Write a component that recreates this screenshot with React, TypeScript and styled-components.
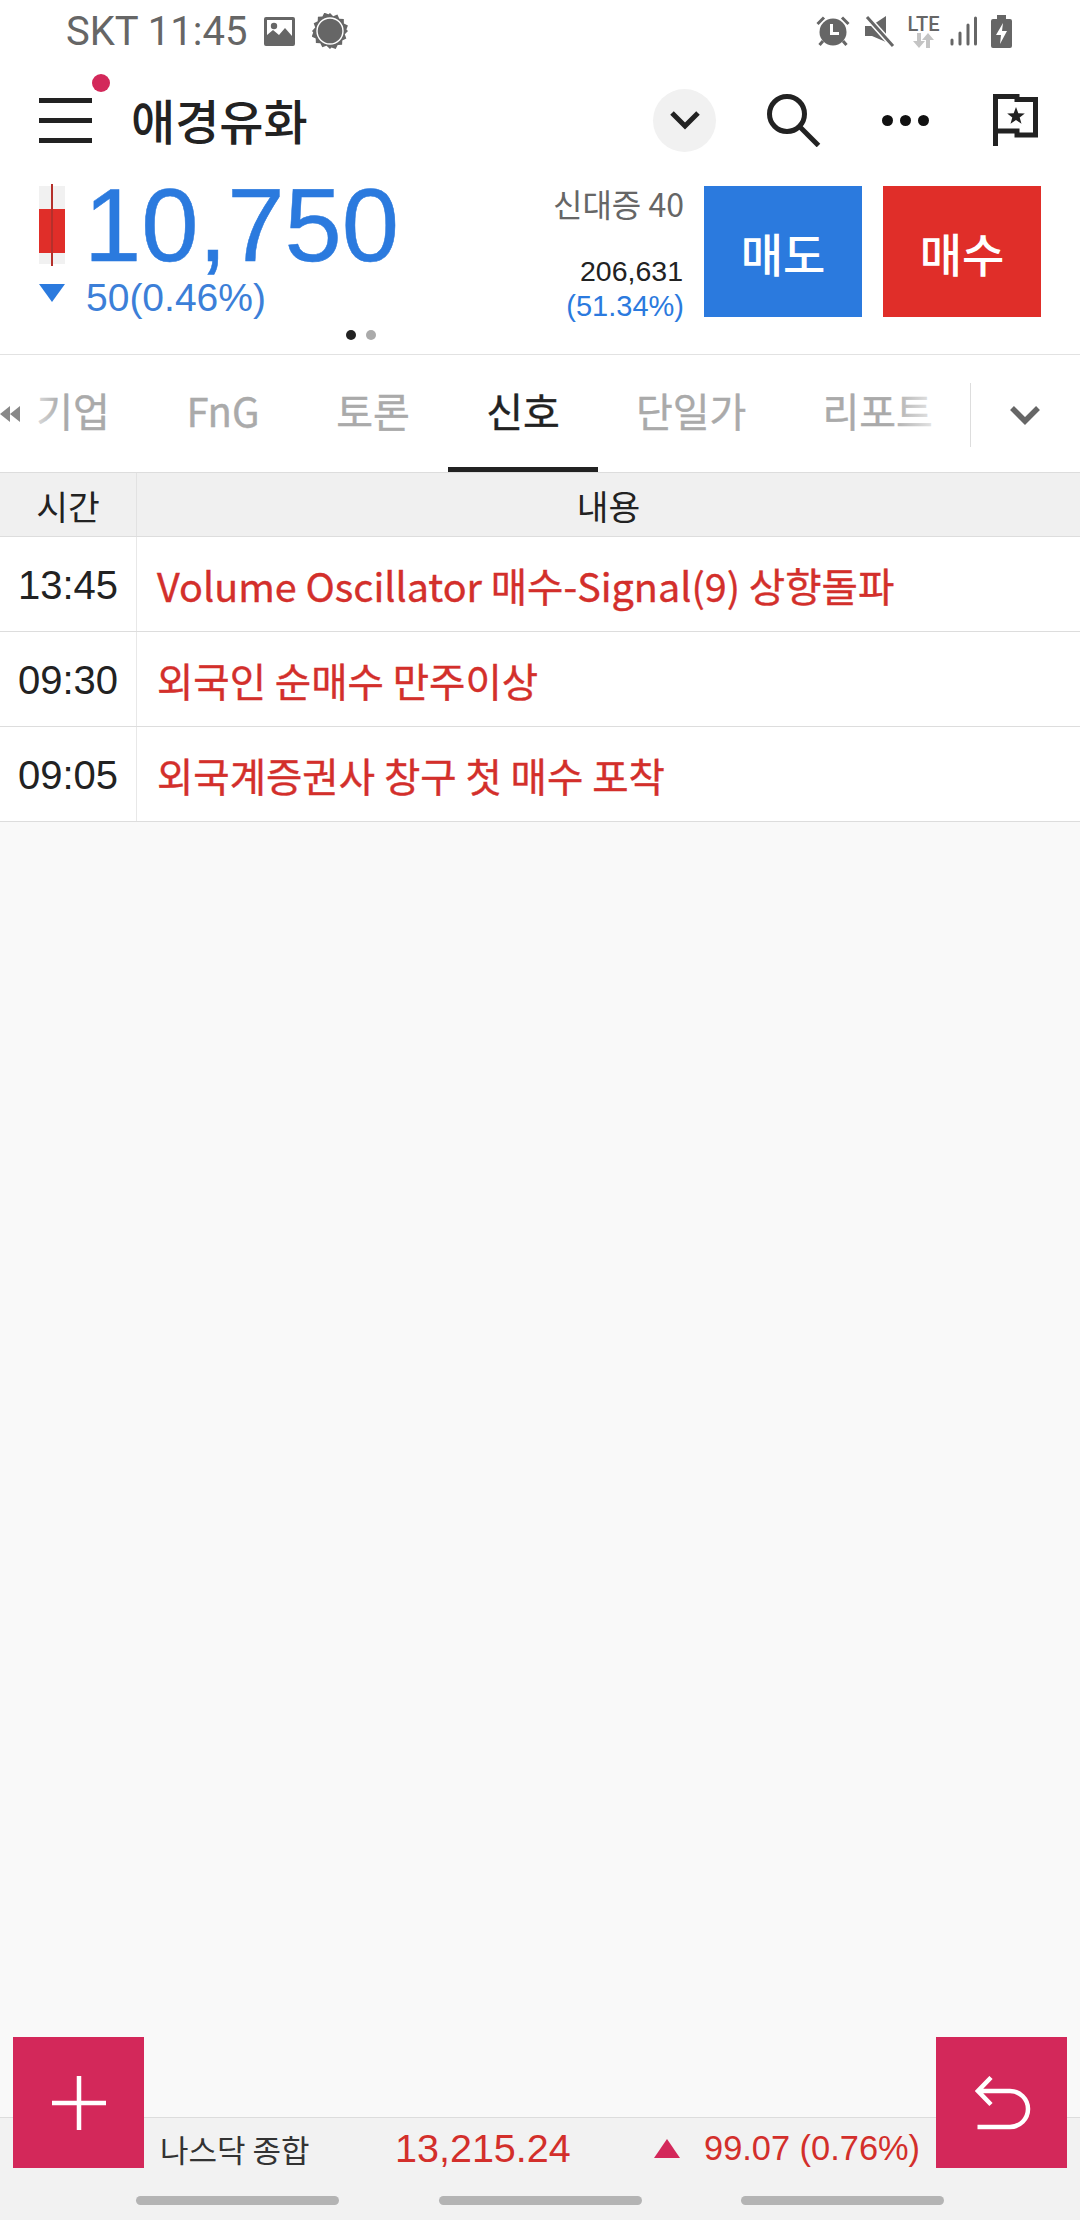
import styled, { createGlobalStyle } from 'styled-components';

const KR = `"Noto Sans CJK KR", "Noto Sans", sans-serif`;
const ARIAL = `"Liberation Sans", Arial, sans-serif`;
const BLUE = '#2b7ade';
const RED = '#e02e29';
const TEXT_RED = '#d32f2b';
const PINK = '#d3285a';

const signals = [
  { time: '13:45', text: 'Volume Oscillator 매수-Signal(9) 상향돌파' },
  { time: '09:30', text: '외국인 순매수 만주이상' },
  { time: '09:05', text: '외국계증권사 창구 첫 매수 포착' },
];

const tabs = ['기업', 'FnG', '토론', '신호', '단일가', '리포트'];

const App = () => (
  <Screen>
    <GlobalStyle />
    <StatusBar>
      <StatusGroup>
        <StatusText>SKT 11:45</StatusText>
        <svg width="31" height="29" viewBox="0 0 31 29" style={{ marginLeft: 17 }}>
          <path fillRule="evenodd" fill="#666" d="M2 0h27a2 2 0 0 1 2 2v25a2 2 0 0 1-2 2H2a2 2 0 0 1-2-2V2a2 2 0 0 1 2-2zM3 3v15l6-5 6 5 6-7 7 8V3z" />
          <circle cx="10" cy="9" r="3.2" fill="#666" />
        </svg>
        <svg width="36" height="36" viewBox="0 0 36 36" style={{ marginLeft: 17 }}>
          <path fill="#666" d="M18 0l3.2 3.2 4.2-1.6 1.9 4.1 4.5.2.1 4.5 4 2-1.5 4.2L36 18l-3.2 3.2 1.5 4.2-4 2-.2 4.4-4.4.2-2 4-4.2-1.6L18 36l-3.5-3.2-4.2 1.5-2-4-4.4-.2-.2-4.5-4-2 1.5-4.2L0 18l3.2-3.6-1.5-4.2 4-2 .2-4.4 4.5-.2 1.9-3.9 4.2 1.6z" />
          <circle cx="18" cy="18" r="13" fill="#666" stroke="#fff" strokeWidth="1.4" />
        </svg>
      </StatusGroup>
      <StatusGroup>
        <svg width="34" height="32" viewBox="0 0 34 32">
          <path stroke="#666" strokeWidth="3" d="M1.500 9L8 2.500M32.500 9L26 2.500M7 26l-3.500 4M27 26l3.500 4" />
          <circle cx="17" cy="17" r="13.500" fill="#666" />
          <path stroke="#fff" strokeWidth="3" fill="none" d="M15.500 9v9.500H23" />
        </svg>
        <svg width="30" height="32" viewBox="0 0 30 32" style={{ marginLeft: 15 }}>
          <path fill="#666" d="M0 11h6L21 1v26L7 21H0z" />
          <path stroke="#fff" strokeWidth="6" d="M1 1l27 30" />
          <path stroke="#666" strokeWidth="3" d="M2 2l26 29" />
        </svg>
        <LteIcon>
          <LteLabel>LTE</LteLabel>
          <svg width="24" height="15" viewBox="0 0 24 15">
            <path fill="#c4c4c4" d="M4 0h4v8h4l-6 7-6-7h4zM17 15h-4V7H9l6-7 6 7h-4z" transform="translate(1 0)" />
          </svg>
        </LteIcon>
        <svg width="27" height="30" viewBox="0 0 27 30" style={{ marginLeft: 11 }}>
          <path stroke="#666" strokeWidth="3" strokeLinecap="round" d="M2 28v-4M10 28V17M18 28V9M25.500 28V2" />
        </svg>
        <svg width="21" height="33" viewBox="0 0 21 33" style={{ marginLeft: 14 }}>
          <path fillRule="evenodd" fill="#666" d="M6 0h9v4h4a2 2 0 0 1 2 2v25a2 2 0 0 1-2 2H2a2 2 0 0 1-2-2V6a2 2 0 0 1 2-2h4zM12 8l-7 12h5l-1 9 7-13h-5z" />
        </svg>
      </StatusGroup>
    </StatusBar>

    <Header>
      <MenuButton>
        <MenuBar />
        <MenuBar />
        <MenuBar />
        <MenuDot />
      </MenuButton>
      <Title>애경유화</Title>
      <HeaderActions>
        <ChevronCircle>
          <svg width="30" height="20" viewBox="0 0 30 20">
            <path fill="none" stroke="#222" strokeWidth="5" d="M2 3l13 13L28 3" />
          </svg>
        </ChevronCircle>
        <svg width="54" height="53" viewBox="0 0 54 53" style={{ marginLeft: 51 }}>
          <circle cx="20" cy="20" r="17.500" fill="none" stroke="#222" strokeWidth="5" />
          <path stroke="#222" strokeWidth="5" d="M33 33l18.500 18.500" />
        </svg>
        <MoreDots>
          <MoreDot />
          <MoreDot />
          <MoreDot />
        </MoreDots>
        <svg width="45" height="52" viewBox="0 0 45 52" style={{ marginLeft: 64 }}>
          <path fill="none" stroke="#222" strokeWidth="5" d="M2.500 52V2.500H24V5.500H42.500V41H24V37H2.500" />
          <path fill="#222" d="M23 13l2.300 6.200 6.500.2-5.100 4.100 1.800 6.300-5.500-3.700-5.500 3.700 1.800-6.300-5.100-4.100 6.500-.2z" />
        </svg>
      </HeaderActions>
    </Header>

    <Quote>
      <QuoteMain>
        <PriceBlock>
          <PriceRow>
            <Candle>
              <CandleRange />
              <CandleBody />
              <CandleWick />
            </Candle>
            <Price>10,750</Price>
          </PriceRow>
          <ChangeRow>
            <DownTriangle />
            <Change>50(0.46%)</Change>
          </ChangeRow>
        </PriceBlock>
        <VolumeBlock>
          <CreditLabel>신대증 40</CreditLabel>
          <VolumeValue>206,631</VolumeValue>
          <VolumeRate>(51.34%)</VolumeRate>
        </VolumeBlock>
        <TradeButton $color={BLUE}>매도</TradeButton>
        <TradeButton $color={RED}>매수</TradeButton>
      </QuoteMain>
      <Pager>
        <PagerDot $active />
        <PagerDot />
      </Pager>
    </Quote>

    <TabBar>
      <TabScroller>
        {tabs.map(tab => (
          <Tab key={tab} $active={tab === '신호'}>
            {tab}
          </Tab>
        ))}
        <LeftFade>
          <svg width="20" height="16" viewBox="0 0 20 16">
            <path fill="#888" d="M10 0v16L0 8zM20 0v16L10 8z" />
          </svg>
        </LeftFade>
        <RightFade />
      </TabScroller>
      <TabMore>
        <svg width="30" height="20" viewBox="0 0 30 20">
          <path fill="none" stroke="#666" strokeWidth="5.500" d="M2 3l13 13L28 3" />
        </svg>
      </TabMore>
    </TabBar>

    <TableHead>
      <TimeHead>시간</TimeHead>
      <ContentHead>내용</ContentHead>
    </TableHead>
    {signals.map(signal => (
      <SignalRow key={signal.time}>
        <TimeCell>{signal.time}</TimeCell>
        <ContentCell>{signal.text}</ContentCell>
      </SignalRow>
    ))}

    <Blank />

    <Footer>
      <Ticker>
        <TickerName>나스닥 종합</TickerName>
        <TickerValue>13,215.24</TickerValue>
        <UpTriangle />
        <TickerChange>99.07 (0.76%)</TickerChange>
      </Ticker>
      <NavHandles>
        <NavHandle />
        <NavHandle />
        <NavHandle />
      </NavHandles>
      <FloatButton $side="left">
        <svg width="54" height="54" viewBox="0 0 54 54">
          <path stroke="#fff" strokeWidth="4.500" d="M0 27h54M27 0v54" />
        </svg>
      </FloatButton>
      <FloatButton $side="right">
        <svg width="56" height="54" viewBox="0 0 56 54" style={{ marginLeft: 3 }}>
          <path fill="none" stroke="#fff" strokeWidth="4.500" d="M16 1.500L3 15l13 13.500M3 15H35a18 18 0 0 1 0 36H2.500" />
        </svg>
      </FloatButton>
    </Footer>
  </Screen>
);

export default App;

const GlobalStyle = createGlobalStyle`
  html, body {
    margin: 0;
    padding: 0;
    background: #f9f9f9;
  }
  * {
    box-sizing: border-box;
  }
`;

const Screen = styled.div`
  width: 1080px;
  height: 2220px;
  display: flex;
  flex-direction: column;
  overflow: hidden;
  background: #f9f9f9;
  font-family: ${KR};
`;

const StatusBar = styled.div`
  height: 62px;
  padding: 0 68px 0 66px;
  display: flex;
  justify-content: space-between;
  align-items: center;
  background: #fff;
`;

const StatusGroup = styled.div`
  display: flex;
  align-items: center;
`;

const StatusText = styled.span`
  padding-top: 2px;
  font-family: Roboto, sans-serif;
  font-size: 40px;
  line-height: 44px;
  color: #666;
`;

const LteIcon = styled.div`
  margin-left: 13px;
  width: 31px;
  display: flex;
  flex-direction: column;
  align-items: center;
`;

const LteLabel = styled.span`
  font-family: Roboto, sans-serif;
  font-size: 20px;
  font-weight: 500;
  line-height: 18px;
  color: #666;
`;

const Header = styled.div`
  height: 116px;
  padding: 0 42px 0 39px;
  display: flex;
  align-items: center;
  background: #fff;
`;

const MenuButton = styled.div`
  position: relative;
  width: 53px;
  height: 45px;
  display: flex;
  flex-direction: column;
  justify-content: space-between;
`;

const MenuBar = styled.span`
  display: block;
  height: 5px;
  background: #222;
`;

const MenuDot = styled.span`
  position: absolute;
  left: 53px;
  top: -24px;
  width: 18px;
  height: 18px;
  border-radius: 50%;
  background: ${PINK};
`;

const Title = styled.h1`
  margin: 0 0 2px 39px;
  font-size: 48px;
  line-height: 60px;
  font-weight: 500;
  color: #222;
`;

const HeaderActions = styled.div`
  margin-left: auto;
  display: flex;
  align-items: center;
`;

const ChevronCircle = styled.div`
  width: 63px;
  height: 63px;
  border-radius: 50%;
  background: #f1f1f1;
  display: flex;
  align-items: center;
  justify-content: center;
`;

const MoreDots = styled.div`
  margin-left: 61px;
  display: flex;
  gap: 7px;
`;

const MoreDot = styled.span`
  width: 11px;
  height: 11px;
  border-radius: 50%;
  background: #111;
`;

const Quote = styled.div`
  height: 177px;
  display: flex;
  flex-direction: column;
  background: #fff;
  border-bottom: 1px solid #e2e2e2;
`;

const QuoteMain = styled.div`
  height: 150px;
  padding: 7px 39px 0 39px;
  display: flex;
  align-items: flex-start;
`;

const PriceBlock = styled.div`
  margin-top: -1px;
  margin-right: auto;
  display: flex;
  flex-direction: column;
`;

const PriceRow = styled.div`
  height: 91px;
  display: flex;
  align-items: flex-start;
`;

const Candle = styled.div`
  position: relative;
  width: 26px;
  height: 82px;
`;

const CandleRange = styled.span`
  position: absolute;
  left: 0;
  right: 0;
  top: 2px;
  bottom: 2px;
  background: #f1f1f1;
`;

const CandleWick = styled.span`
  position: absolute;
  left: 12px;
  top: 0;
  bottom: 0;
  width: 2px;
  background: #b5302b;
`;

const CandleBody = styled.span`
  position: absolute;
  left: 0;
  right: 0;
  top: 25px;
  height: 44px;
  background: ${RED};
`;

const Price = styled.span`
  margin: -4px 0 0 19px;
  font-family: ${ARIAL};
  font-size: 103px;
  line-height: 91px;
  -webkit-text-stroke: 0.5px ${BLUE};
  color: ${BLUE};
`;

const ChangeRow = styled.div`
  display: flex;
  align-items: center;
`;

const DownTriangle = styled.span`
  width: 0;
  height: 0;
  margin-bottom: 10px;
  border-left: 13px solid transparent;
  border-right: 13px solid transparent;
  border-top: 18px solid ${BLUE};
`;

const Change = styled.span`
  margin-left: 21px;
  font-family: ${ARIAL};
  font-size: 39px;
  line-height: 46px;
  color: #3c7fd8;
`;

const VolumeBlock = styled.div`
  width: 201px;
  margin-right: 20px;
  display: flex;
  flex-direction: column;
  align-items: flex-end;
  font-family: ${ARIAL};
`;

const CreditLabel = styled.span`
  margin-top: -2px;
  font-family: ${KR};
  font-size: 32px;
  line-height: 40px;
  color: #666;
`;

const VolumeValue = styled.span`
  margin-top: 31px;
  padding-right: 1px;
  font-size: 28.5px;
  line-height: 34px;
  color: #222;
`;

const VolumeRate = styled.span`
  margin-top: 1px;
  font-size: 29px;
  line-height: 34px;
  color: ${BLUE};
`;

const TradeButton = styled.div<{ $color: string }>`
  width: 158px;
  height: 131px;
  margin-top: 1px;
  margin-left: ${props => (props.$color === BLUE ? 0 : 21)}px;
  display: flex;
  align-items: center;
  justify-content: center;
  font-size: 46px;
  font-weight: 500;
  color: #fff;
  background: ${props => props.$color};
`;

const Pager = styled.div`
  width: 722px;
  margin-top: 2px;
  display: flex;
  justify-content: center;
  gap: 10px;
`;

const PagerDot = styled.span<{ $active?: boolean }>`
  width: 10px;
  height: 10px;
  border-radius: 50%;
  background: ${props => (props.$active ? '#222' : '#aaa')};
`;

const TabBar = styled.div`
  height: 118px;
  display: flex;
  background: #fff;
  border-bottom: 1px solid #ddd;
`;

const TabScroller = styled.div`
  position: relative;
  width: 970px;
  height: 117px;
  display: flex;
  overflow: hidden;
`;

const Tab = styled.div<{ $active?: boolean }>`
  flex: none;
  height: 117px;
  min-width: 150px;
  padding: 0 38px 2px;
  display: flex;
  align-items: center;
  justify-content: center;
  font-size: 40px;
  -webkit-text-stroke: 0.4px ${props => (props.$active ? '#222' : '#aaa')};
  color: ${props => (props.$active ? '#222' : '#aaa')};
  border-bottom: 5px solid ${props => (props.$active ? '#222' : 'transparent')};
  &:first-child {
    margin-left: -2px;
  }
`;

const LeftFade = styled.div`
  position: absolute;
  left: 0;
  top: 0;
  bottom: 5px;
  width: 60px;
  display: flex;
  align-items: center;
  padding-top: 6px;
  background: linear-gradient(to right, #fff 34%, rgba(255, 255, 255, 0));
`;

const RightFade = styled.div`
  position: absolute;
  right: 30px;
  top: 0;
  bottom: 5px;
  width: 50px;
  background: linear-gradient(to left, rgba(255, 255, 255, 0.8), rgba(255, 255, 255, 0));
`;

const TabMore = styled.div`
  position: relative;
  flex: 1;
  display: flex;
  align-items: center;
  justify-content: center;
  padding-top: 2px;
  &::before {
    content: '';
    position: absolute;
    left: 0;
    top: 28px;
    height: 64px;
    width: 1px;
    background: #ddd;
  }
`;

const TableHead = styled.div`
  height: 64px;
  display: grid;
  grid-template-columns: 137px 1fr;
  background: #f0f0f0;
  border-bottom: 1px solid #ddd;
  font-size: 34.5px;
  color: #222;
`;

const TimeHead = styled.div`
  display: flex;
  align-items: center;
  justify-content: center;
  border-right: 1px solid #e2e2e2;
`;

const ContentHead = styled.div`
  display: flex;
  align-items: center;
  justify-content: center;
`;

const SignalRow = styled.div`
  height: 95px;
  display: grid;
  grid-template-columns: 137px 1fr;
  background: #fff;
  border-bottom: 1px solid #ddd;
`;

const TimeCell = styled.div`
  padding-top: 3px;
  display: flex;
  align-items: center;
  justify-content: center;
  font-family: ${ARIAL};
  font-size: 40px;
  color: #222;
  border-right: 1px solid #e8e8e8;
`;

const ContentCell = styled.div`
  padding-left: 20px;
  display: flex;
  align-items: center;
  font-size: 39.5px;
  -webkit-text-stroke: 0.4px ${TEXT_RED};
  color: ${TEXT_RED};
`;

const Blank = styled.div`
  flex: 1;
`;

const Footer = styled.div`
  position: relative;
  height: 103px;
  background: #f2f2f2;
  border-top: 1px solid #ddd;
`;

const Ticker = styled.div`
  height: 60px;
  padding-left: 160px;
  display: flex;
  align-items: center;
`;

const TickerName = styled.span`
  width: 235px;
  font-size: 31px;
  color: #333;
`;

const TickerValue = styled.span`
  width: 259px;
  font-family: ${ARIAL};
  font-size: 39.5px;
  color: ${TEXT_RED};
`;

const UpTriangle = styled.span`
  width: 0;
  height: 0;
  border-left: 13px solid transparent;
  border-right: 13px solid transparent;
  border-bottom: 19px solid ${PINK};
`;

const TickerChange = styled.span`
  margin-left: 24px;
  font-family: ${ARIAL};
  font-size: 34.4px;
  color: ${TEXT_RED};
`;

const NavHandles = styled.div`
  margin-top: 18px;
  padding: 0 136px;
  display: flex;
  justify-content: space-between;
`;

const NavHandle = styled.span`
  width: 203px;
  height: 9px;
  border-radius: 5px;
  background: #b4b4b4;
`;

const FloatButton = styled.div<{ $side: 'left' | 'right' }>`
  position: absolute;
  top: -81px;
  ${props => props.$side}: 13px;
  width: 131px;
  height: 131px;
  display: flex;
  align-items: center;
  justify-content: center;
  background: ${PINK};
`;
